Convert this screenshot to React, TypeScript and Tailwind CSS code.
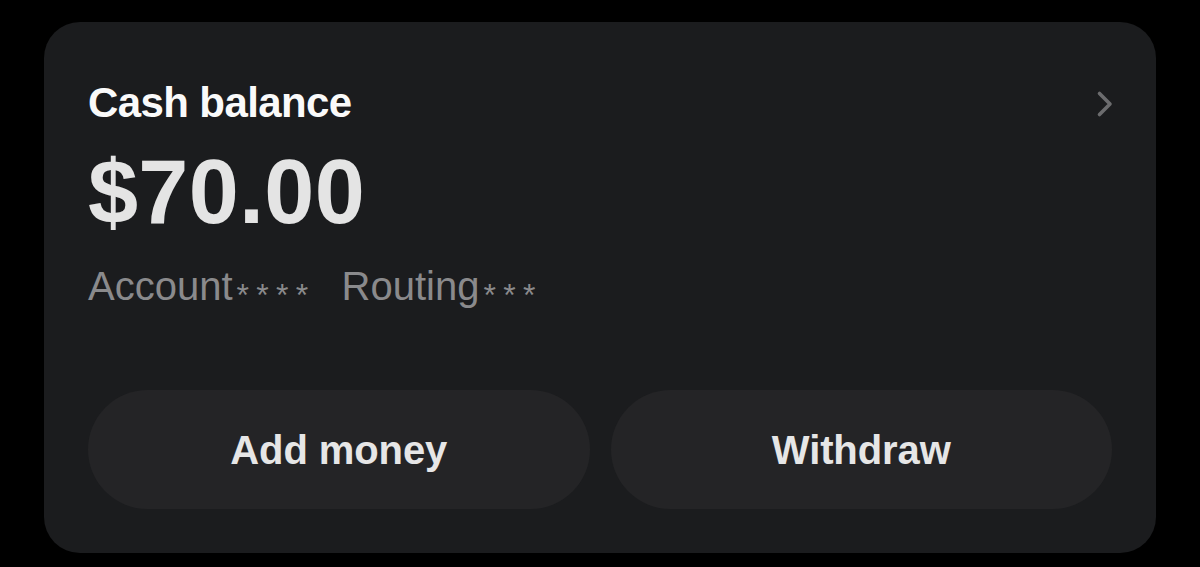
import { useState } from 'react';

const stars = (n: number) => '*'.repeat(n);

export default function App() {
  const [balance] = useState('$70.00');

  return (
    <div className="w-[1200px] h-[567px] bg-black pt-[22px] px-[44px] font-['Liberation_Sans',Arial,sans-serif]">
      <div className="h-[531px] rounded-[36px] bg-[#1b1c1e] px-[44px] pt-[60px] pb-[44px] flex flex-col">
        <div className="flex items-start justify-between">
          <h1 className="text-[42px] leading-none font-semibold text-[#fafafa] tracking-[-0.6px]">Cash balance</h1>
          <svg width="18" height="28" viewBox="0 0 18 28" className="mt-[8px] -mr-[2px]" fill="none">
            <path d="M3.5 3.5 L14 14 L3.5 24.5" stroke="#6c6c6e" strokeWidth="3.6" strokeLinecap="round" strokeLinejoin="round" />
          </svg>
        </div>
        <div className="mt-[23px] text-[90px] leading-none font-bold text-[#e4e4e4] tracking-[0.3px]">{balance}</div>
        <div className="mt-[29px] flex items-center text-[40px] leading-none text-[#8a8a8c]">
          <span>Account</span>
          <span className="inline-block translate-y-[9px] text-[32px] tracking-[7.3px] ml-[4px]">{stars(4)}</span>
          <span className="ml-[26px]">Routing</span>
          <span className="inline-block translate-y-[9px] text-[32px] tracking-[7.3px] ml-[4px]">{stars(3)}</span>
        </div>
        <div className="mt-auto grid grid-cols-2 gap-[21px]">
          {['Add money', 'Withdraw'].map(label => (
            <button key={label} className="h-[119px] rounded-full bg-[#242426] text-[40px] font-semibold text-[#e6e6e6] tracking-[-0.1px]">
              {label}
            </button>
          ))}
        </div>
      </div>
    </div>
  );
}
